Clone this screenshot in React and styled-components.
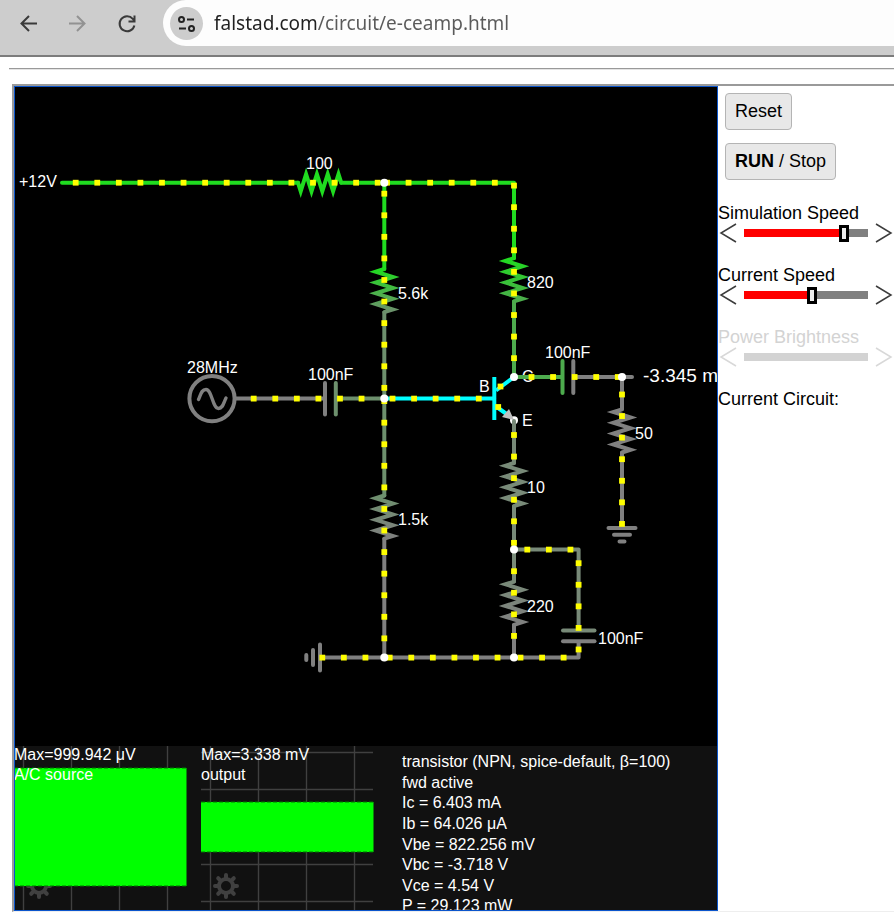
import React, { useState } from "react";
import styled, { createGlobalStyle } from "styled-components";

const GlobalStyle = createGlobalStyle`
  *, *::before, *::after { box-sizing: border-box; }
  body { margin: 0; background: #fff; }
`;

const Page = styled.div`
  height: 100vh;
  overflow: hidden;
  display: flex;
  flex-direction: column;
  font-family: "Liberation Sans", Arial, sans-serif;
  color: #000;
`;

/* ---------- browser bar ---------- */

const Toolbar = styled.header`
  flex: none;
  height: 57px;
  display: flex;
  align-items: flex-start;
  background: #cdcdcd;
  border-bottom: 2px solid #7c7c7c;
`;

const NavGroup = styled.nav`
  display: flex;
  gap: 17px;
  padding: 8px 21px 0 12px;
`;

const NavButton = styled.button`
  width: 32px;
  height: 32px;
  padding: 0;
  border: 0;
  background: none;
  color: ${(p) => (p.disabled ? "#929292" : "#3a3a3a")};

  svg { display: block; }
`;

const AddressBar = styled.form`
  flex: 1;
  min-width: 0;
  height: 46px;
  display: flex;
  align-items: center;
  gap: 11px;
  padding-left: 7px;
  background: #fdfdfd;
  border-radius: 23px 0 0 23px;
`;

const SiteInfo = styled.button`
  flex: none;
  width: 33px;
  height: 33px;
  padding: 0;
  border: 0;
  border-radius: 50%;
  background: #cdcdcd;
  color: #222;

  svg { display: block; }
`;

const Address = styled.input`
  flex: 1;
  min-width: 0;
  padding: 0;
  border: 0;
  outline: 0;
  font: 19px/28px "Noto Sans", sans-serif;
  color: transparent;
  background: linear-gradient(to right, #202020 104px, #5a5a5a 104px);
  background-clip: text;
  -webkit-background-clip: text;
`;

/* ---------- page content ---------- */

const Rule = styled.hr`
  flex: none;
  width: auto;
  height: 2px;
  margin: 11px 0 14px 9px;
  border: 0;
  border-top: 1px solid #999;
  border-bottom: 1px solid #e4e4e4;
`;

const Frame = styled.main`
  flex: 1;
  min-height: 0;
  margin-left: 12px;
  display: grid;
  grid-template-columns: minmax(0, 1fr) 176px;
  border-top: 2px solid #9a9a9a;
  border-left: 2px solid #9a9a9a;
  border-bottom: 1px solid #eee;
`;

const Simulator = styled.section`
  min-height: 0;
  overflow: hidden;
  display: flex;
  flex-direction: column;
  background: #000;
  outline: 1px solid #0b55cc;
  outline-offset: -1px;
`;

const Schematic = styled.svg`
  flex: none;
  display: block;
  width: 100%;
  height: 660px;
  font-size: 16px;
  fill: none;
  stroke-width: 4px;

  text { fill: #fff; stroke: none; }
`;

const ScopeRow = styled.div`
  flex: 1;
  min-height: 0;
  display: grid;
  grid-template-columns: 173px 173px minmax(0, 1fr);
  column-gap: 14px;
  overflow: hidden;
  background: #111;
  color: #fff;
  font-size: 16px;
`;

const Scope = styled.figure`
  margin: 0;
  display: grid;
  grid-template: 164px / 173px;

  > * { grid-area: 1 / 1; }
`;

const ScopeText = styled.figcaption`
  margin-top: -1px;
  line-height: 20px;
  white-space: nowrap;
`;

const Readout = styled.ul`
  height: 165px;
  margin: 6px 0 0;
  padding: 0 0 0 14px;
  display: grid;
  grid-auto-rows: 1fr;
  list-style: none;
  line-height: 20px;
  white-space: nowrap;
`;

const Sidebar = styled.aside`
  display: flex;
  flex-direction: column;
  background: #fff;
  font-size: 18px;
  line-height: 20px;
`;

const ButtonStack = styled.div`
  display: flex;
  flex-direction: column;
  align-items: flex-start;
  gap: 13px;
  padding: 7px;
`;

const ControlButton = styled.button`
  height: 37px;
  padding: 0 9px 1px;
  border: 1px solid #b4b4b4;
  border-radius: 4px;
  background: #e8e8e8;
  color: #000;
  font: inherit;
`;

const Sliders = styled.div`
  display: flex;
  flex-direction: column;
  gap: 22px;
  padding-top: 16px;
`;

const SliderGroup = styled.div`
  color: ${(p) => (p.$off ? "#d3d3d3" : "#000")};
`;

const SliderLabel = styled.label`
  display: block;
  white-space: nowrap;
`;

const SliderRow = styled.div`
  display: grid;
  grid-template-columns: 26px minmax(0, 1fr) 26px;
  align-items: center;
  height: 20px;
`;

const StepButton = styled.button`
  width: 26px;
  height: 20px;
  padding: 0;
  border: 0;
  background: none;
  color: ${(p) => (p.disabled ? "#d8d8d8" : "#3c3c3c")};

  svg { display: block; }
`;

const Range = styled.input`
  appearance: none;
  width: 100%;
  height: 20px;
  margin: 0;
  background: linear-gradient(to right, #f00 var(--fill), #808080 var(--fill)) center / 100% 8px no-repeat;

  &::-webkit-slider-thumb {
    appearance: none;
    width: 10px;
    height: 17px;
    border: 3px solid #000;
    background: #eee;
  }

  &:disabled { background: linear-gradient(#d3d3d3, #d3d3d3) center / 100% 8px no-repeat; }
  &:disabled::-webkit-slider-thumb { visibility: hidden; }
`;

/* ---------- schematic parts ---------- */

const GREEN = "#20dc20";
const COLLECTOR = "#4dab4d";
const BASE = "#6d906d";
const EMITTER = "#788a78";
const GREY = "#808080";
const CYAN = "#00ffff";

const PITCH = 21.57;

const run = (start, count) => Array.from({ length: count }, (_, i) => start + i * PITCH);

function Wire({ d, color }) {
  return <path d={d} stroke={color} strokeLinecap="round" strokeLinejoin="round" />;
}

function DotsH({ y, start, count }) {
  return run(start, count).map((x) => (
    <rect key={x} x={x - 2.9} y={y - 2.9} width="5.8" height="5.8" fill="#ff0" />
  ));
}

function DotsV({ x, start, count }) {
  return run(start, count).map((y) => (
    <rect key={y} x={x - 2.9} y={y - 2.9} width="5.8" height="5.8" fill="#ff0" />
  ));
}

function Resistor({ x, y, horizontal, stroke }) {
  const step = 2.7;
  const swing = 8.6;
  const points = [[0, 0]];
  for (let i = 0; i < 8; i += 1) {
    points.push([step * (2 * i + 1), i % 2 ? -swing : swing]);
  }
  points.push([step * 16, 0]);
  const d = points
    .map(([along, off]) => (horizontal ? `${x + along},${y + off}` : `${x - off},${y + along}`))
    .join(" ");
  return <polyline points={d} stroke={stroke} strokeMiterlimit="10" strokeLinecap="round" />;
}

function Node({ x, y }) {
  return <circle cx={x} cy={y} r="4" fill="#fff" />;
}

function Fade({ id, y1, y2, from, to }) {
  return (
    <linearGradient id={id} gradientUnits="userSpaceOnUse" x1="0" x2="0" y1={y1} y2={y2}>
      <stop offset="0" stopColor={from} />
      <stop offset="1" stopColor={to} />
    </linearGradient>
  );
}

function Circuit() {
  return (
    <Schematic viewBox="14 86 704 660" role="img" aria-label="Common-emitter amplifier schematic">
      <defs>
        <Fade id="r56k" y1={269} y2={312} from={GREEN} to={BASE} />
        <Fade id="r820" y1={258} y2={302} from={GREEN} to={COLLECTOR} />
        <Fade id="r15k" y1={495} y2={539} from={BASE} to={GREY} />
        <Fade id="r220" y1={581} y2={625} from={EMITTER} to={GREY} />
      </defs>

      <text x="522" y="382">C</text>

      <Wire color={GREEN} d="M62 182.7H298M341.2 182.7H514V258M384.3 182.7V269" />
      <Wire color={COLLECTOR} d="M514 301.5V377H562" />
      <Wire color={BASE} d="M384.3 312.5V495.5M336 398.6H384" />
      <Wire color={GREY} d="M384.3 539V657.6M236 398.6H324M574 377H632M622 377V409M622 453V527" />
      <Wire color={GREY} d="M320 657.6H578.6V642M514 625V657.6" />
      <Wire color={CYAN} d="M386 398.6H494" />
      <path d="M494.3 377V420" stroke={CYAN} />
      <path d="M496 390.5L514 377M496 406.5L508 415" stroke={CYAN} />

      <Resistor horizontal x={298} y={182.7} stroke={GREEN} />
      <Resistor x={384.3} y={269} stroke="url(#r56k)" />
      <Resistor x={514} y={258.2} stroke="url(#r820)" />
      <Resistor x={384.3} y={495.5} stroke="url(#r15k)" />
      <Resistor x={514} y={463} stroke={EMITTER} />
      <Resistor x={514} y={581.6} stroke="url(#r220)" />
      <Resistor x={622} y={409.3} stroke={GREY} />

      <circle cx="212" cy="398.6" r="22.6" stroke={GREY} />
      <path
        d="M198.500 399.500C201 394 201.500 389.500 206 389.500C212 389.500 212.500 408.500 218.500 408.500C223 408.500 223.500 403 226 398"
        stroke={GREY}
        strokeWidth="3.400"
        strokeLinecap="round"
      />

      <Wire color={GREY} d="M325 383V414.500M573.300 361V393" />
      <Wire color={BASE} d="M335.800 383V414.500" />
      <Wire color={COLLECTOR} d="M562.500 361V393" />
      <Wire color={GREY} d="M608.500 528H635.500M614 534.700H630M619.500 541.500H624.500" />
      <Wire color={GREY} d="M320 644.500V670.500M313 650V665M306.300 655V660" />

      <circle cx="514" cy="420.300" r="4" fill="#fff" />
      <path d="M509 409L502 417L514 420Z" fill="#c0c0c0" />
      <Wire color={EMITTER} d="M514 421V463M514 506.200V581.600M514 549.600H578.600V628" />
      <Wire color={EMITTER} d="M563 630.500H594.500" />
      <Wire color={GREY} d="M563 641.200H594.500" />

      <DotsH y={182.7} start={75.7} count={15} />
      <DotsH y={182.7} start={387} count={6} />
      <DotsV x={514} start={185.6} count={9} />
      <DotsV x={384.3} start={193.7} count={10} />
      <DotsV x={384.3} start={401.100} count={12} />
      <DotsH y={398.6} start={253.7} count={6} />
      <DotsH y={398.6} start={392.5} count={5} />
      <DotsH y={377} start={531.5} count={5} />
      <DotsV x={622} start={394.5} count={7} />
      <DotsV x={514} start={435} count={6} />
      <DotsH y={549.6} start={527.3} count={3} />
      <DotsV x={578.6} start={563.2} count={5} />
      <DotsV x={514} start={571.2} count={4} />
      <DotsH y={657.6} start={322.3} count={3} />
      <DotsH y={657.6} start={389.7} count={6} />
      <DotsH y={657.6} start={520.5} count={3} />
      <rect x="497.6" y="383.600" width="5.8" height="5.8" fill="#ff0" />
      <rect x="495.3" y="404.100" width="5.8" height="5.8" fill="#ff0" />

      <Node x={384.3} y={182.7} />
      <Node x={384.3} y={398.6} />
      <Node x={384.3} y={657.6} />
      <Node x={514} y={377} />
      <Node x={514} y={549.6} />
      <Node x={514} y={657.6} />
      <Node x={622} y={377} />

      <text x="19" y="187">+12V</text>
      <text x="306" y="169">100</text>
      <text x="398" y="299">5.6k</text>
      <text x="527" y="288">820</text>
      <text x="187" y="373">28MHz</text>
      <text x="308" y="380">100nF</text>
      <text x="545" y="358">100nF</text>
      <text x="479" y="392">B</text>
      <text x="522" y="426">E</text>
      <text x="643" y="382" fontSize="19">-3.345 m</text>
      <text x="635" y="439">50</text>
      <text x="527" y="493">10</text>
      <text x="398" y="525">1.5k</text>
      <text x="527" y="612">220</text>
      <text x="598" y="644">100nF</text>
    </Schematic>
  );
}

/* ---------- scopes ---------- */

function Gear({ x, y }) {
  return (
    <g transform={`translate(${x} ${y})`} stroke="#404040" fill="none">
      <circle r="7" strokeWidth="4" />
      {[0, 45, 90, 135, 180, 225, 270, 315].map((a) => (
        <path key={a} d="M0 -8V-11" strokeWidth="4" strokeLinecap="round" transform={`rotate(${a})`} />
      ))}
    </g>
  );
}

function ScopeView({ max, name, columns, rows, top, bottom, gearX }) {
  return (
    <Scope>
      <svg width="173" height="164" aria-hidden="true">
        <g stroke="#404040" strokeWidth="1.400">
          {columns.map((x) => <path key={x} d={`M${x} 0V164`} />)}
          {rows.map((y) => <path key={y} d={`M0 ${y}H172`} />)}
        </g>
        <Gear x={gearX} y={140} />
        <rect x="0" y={top} width="172.500" height={bottom - top} fill="#0f0" />
        <path d={`M0 ${top}H172M0 ${bottom}H172`} stroke="#070" strokeDasharray="4 2" />
      </svg>
      <ScopeText>{max}<br />{name}</ScopeText>
    </Scope>
  );
}

const READINGS = [
  "transistor (NPN, spice-default, β=100)",
  "fwd active",
  "Ic = 6.403 mA",
  "Ib = 64.026 μA",
  "Vbe = 822.256 mV",
  "Vbc = -3.718 V",
  "Vce = 4.54 V",
  "P = 29.123 mW",
];

/* ---------- sidebar ---------- */

function SpeedSlider({ id, label, initial, disabled }) {
  const [value, setValue] = useState(initial);
  const nudge = (by) => setValue((v) => Math.min(100, Math.max(0, v + by)));
  return (
    <SliderGroup $off={disabled}>
      <SliderLabel htmlFor={id}>{label}</SliderLabel>
      <SliderRow>
        <StepButton type="button" disabled={disabled} aria-label={`Decrease ${label}`} onClick={() => nudge(-1)}>
          <svg width="26" height="20" fill="none" stroke="currentColor" strokeWidth="1.500">
            <path d="M18 1L3 10L18 19" />
          </svg>
        </StepButton>
        <Range
          id={id}
          type="range"
          min="0"
          max="100"
          value={value}
          disabled={disabled}
          onChange={(e) => setValue(Number(e.target.value))}
          style={{ "--fill": `${value}%` }}
        />
        <StepButton type="button" disabled={disabled} aria-label={`Increase ${label}`} onClick={() => nudge(1)}>
          <svg width="26" height="20" fill="none" stroke="currentColor" strokeWidth="1.500">
            <path d="M8 1L23 10L8 19" />
          </svg>
        </StepButton>
      </SliderRow>
    </SliderGroup>
  );
}

export default function App() {
  const [url, setUrl] = useState("falstad.com/circuit/e-ceamp.html");
  return (
    <Page>
      <GlobalStyle />
      <Toolbar>
        <NavGroup aria-label="History">
          <NavButton type="button" aria-label="Back">
            <svg width="32" height="32" fill="none" stroke="currentColor" strokeWidth="2">
              <path d="M25 15.500H9.500M17 8L9.500 15.500L17 23" />
            </svg>
          </NavButton>
          <NavButton type="button" aria-label="Forward" disabled>
            <svg width="32" height="32" fill="none" stroke="currentColor" strokeWidth="2">
              <path d="M8 15.500H23.500M16 8L23.500 15.500L16 23" />
            </svg>
          </NavButton>
          <NavButton type="button" aria-label="Reload">
            <svg width="32" height="32" fill="none" stroke="currentColor" strokeWidth="2">
              <path d="M24.400 17.500A7.500 7.500 0 1 1 22.800 10.800L24.500 13M24.500 7.500V13.500H18.500" />
            </svg>
          </NavButton>
        </NavGroup>
        <AddressBar onSubmit={(e) => e.preventDefault()}>
          <SiteInfo type="button" aria-label="View site information">
            <svg width="33" height="33" fill="none" stroke="currentColor" strokeWidth="2">
              <circle cx="11.500" cy="12.500" r="2.500" />
              <path d="M17 12.500H24M9 21.500H16" />
              <circle cx="21.500" cy="21.500" r="2.500" />
            </svg>
          </SiteInfo>
          <Address aria-label="Address" value={url} spellCheck={false} onChange={(e) => setUrl(e.target.value)} />
        </AddressBar>
      </Toolbar>

      <Rule />

      <Frame>
        <Simulator>
          <Circuit />
          <ScopeRow>
            <ScopeView
              max="Max=999.942 μV"
              name="A/C source"
              columns={[9.5, 57.5, 105.5, 153.5]}
              rows={[]}
              top={22}
              bottom={140}
              gearX={25}
            />
            <ScopeView
              max="Max=3.338 mV"
              name="output"
              columns={[9.5, 57.5, 105.5, 153.5]}
              rows={[6.5, 43.5, 118.5, 155.5]}
              top={56}
              bottom={106}
              gearX={25}
            />
            <Readout>
              {READINGS.map((line) => <li key={line}>{line}</li>)}
            </Readout>
          </ScopeRow>
        </Simulator>

        <Sidebar>
          <ButtonStack>
            <ControlButton type="button">Reset</ControlButton>
            <ControlButton type="button"><strong>RUN</strong> / Stop</ControlButton>
          </ButtonStack>
          <Sliders>
            <SpeedSlider id="sim-speed" label="Simulation Speed" initial={83} />
            <SpeedSlider id="current-speed" label="Current Speed" initial={55} />
            <SpeedSlider id="power-brightness" label="Power Brightness" initial={50} disabled />
            <div>Current Circuit:</div>
          </Sliders>
        </Sidebar>
      </Frame>
    </Page>
  );
}
